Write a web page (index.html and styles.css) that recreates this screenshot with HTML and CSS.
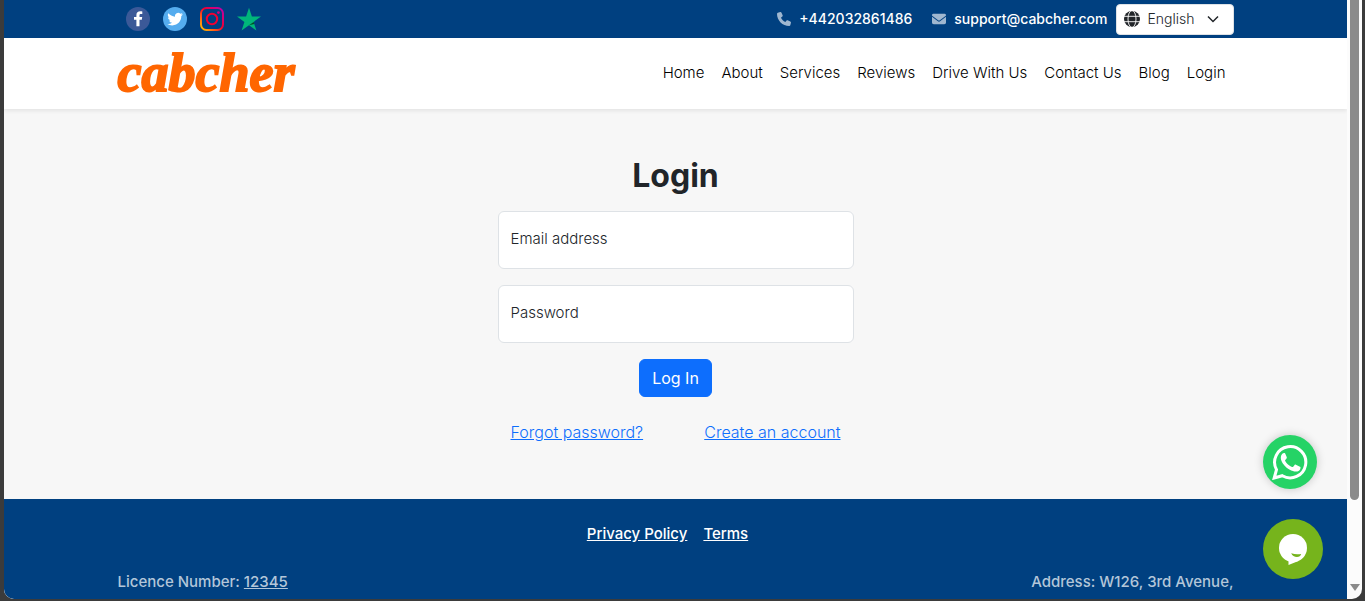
FILE: index.html
```html
<!DOCTYPE html>
<html lang="en">
<head>
<meta charset="utf-8">
<meta name="viewport" content="width=device-width, initial-scale=1">
<title>Login - Cabcher</title>
<link rel="stylesheet" href="styles.css">
</head>
<body>
<div class="window">
  <div class="page">
    <div class="topbar">
      <div class="container topbar-row">
        <div class="social">
          <a href="#" aria-label="Facebook"><svg viewBox="0 0 24 24"><circle cx="12" cy="12" r="12" fill="#3b5998"/><path fill="#fff" d="M13.500 19.300v-6.500h2.300l.4-2.800h-2.700V8.300c0-.8.4-1.300 1.400-1.300h1.400V4.500c-.5-.1-1.200-.2-2-.2-2.400 0-3.900 1.300-3.900 3.700v2H8v2.800h2.400v6.500z"/></svg></a>
          <a href="#" aria-label="Twitter"><svg viewBox="0 0 24 24"><circle cx="12" cy="12" r="12" fill="#55acee"/><path fill="#fff" transform="translate(4.300 4.300) scale(.65)" d="M23.950 4.570a10 10 0 0 1-2.820.770 4.960 4.960 0 0 0 2.160-2.720c-.950.550-2 .950-3.130 1.180a4.920 4.920 0 0 0-8.380 4.480C7.690 8.090 4.070 6.130 1.640 3.160a4.920 4.920 0 0 0 1.520 6.570 4.900 4.900 0 0 1-2.230-.610v.060a4.920 4.920 0 0 0 3.950 4.830 5 5 0 0 1-2.210.080 4.940 4.940 0 0 0 4.600 3.420A9.870 9.870 0 0 1 0 19.540a13.990 13.990 0 0 0 7.550 2.210c9.050 0 14-7.500 14-13.980 0-.210 0-.420-.020-.630a9.940 9.940 0 0 0 2.420-2.570z"/></svg></a>
          <a href="#" aria-label="Instagram"><svg viewBox="0 0 24 24"><defs><linearGradient id="insta" x1="0" y1="1" x2="1" y2="0"><stop offset="0" stop-color="#ffc800"/><stop offset=".3" stop-color="#ff5a16"/><stop offset=".55" stop-color="#f00030"/><stop offset="1" stop-color="#b900b4"/></linearGradient></defs><rect x="1" y="1" width="22" height="22" rx="5.500" fill="none" stroke="url(#insta)" stroke-width="2"/><circle cx="12" cy="12" r="5.200" fill="none" stroke="#f00030" stroke-width="2"/><circle cx="18.400" cy="5.600" r="1.400" fill="#d1007c"/></svg></a>
          <a href="#" aria-label="Trustpilot"><svg viewBox="0 0 24 24"><path fill="#00b67a" d="M12 .8l2.900 8.700H24l-7.400 5.400 2.800 8.600-7.400-5.300-7.400 5.300 2.800-8.600L0 9.500h9.100z"/><path fill="#005128" d="M17.300 16.900l-.7-2-4.600 3.300z"/></svg></a>
        </div>
        <div class="contact">
          <a class="contact-link" href="tel:+442032861486"><svg class="contact-icon" viewBox="0 0 512 512"><path d="M165 25c-8-19-29-29-48-23L29 26C12 31 0 46 0 64c0 247 201 448 448 448 18 0 33-12 38-29l24-88c5-20-5-41-24-49l-96-40c-16-7-35-2-46 12l-40 49C233 334 178 279 145 208l49-40c14-11 19-30 12-46z"/></svg><span>+442032861486</span></a>
          <a class="contact-link" href="mailto:support@cabcher.com"><svg class="contact-icon" viewBox="0 0 512 512"><path d="M48 64a48 48 0 0 0-29 86l218 164c11 8 27 8 38 0l218-164a48 48 0 0 0-29-86zM0 176v208c0 35 29 64 64 64h384c35 0 64-29 64-64V176L294 339c-23 18-54 18-77 0z"/></svg><span>support@cabcher.com</span></a>
          <label class="language">
            <svg class="globe" viewBox="0 0 16 16"><circle cx="8" cy="8" r="8" fill="#212529"/><g fill="none" stroke="#fff" stroke-width=".9"><ellipse cx="8" cy="8" rx="4" ry="8.400"/><path d="M0 5.300h16M0 10.700h16"/></g></svg>
            <select aria-label="Language"><option>English</option></select>
            <svg class="chevron" viewBox="0 0 12 12"><path d="M1 3.500l5 5 5-5" fill="none" stroke="#212529" stroke-width="1.500"/></svg>
          </label>
        </div>
      </div>
    </div>
    <header class="header">
      <div class="container header-row">
        <a class="logo" href="#">cabcher</a>
        <nav class="nav">
          <a href="#">Home</a><a href="#">About</a><a href="#">Services</a><a href="#">Reviews</a><a href="#">Drive With Us</a><a href="#">Contact Us</a><a href="#">Blog</a><a href="#">Login</a>
        </nav>
      </div>
    </header>
    <main class="main">
      <form class="login">
        <h1>Login</h1>
        <div class="field"><input id="email" type="email"><label for="email">Email address</label></div>
        <div class="field"><input id="password" type="password"><label for="password">Password</label></div>
        <button class="submit" type="button">Log In</button>
        <div class="login-links"><a href="#">Forgot password?</a><a href="#">Create an account</a></div>
      </form>
    </main>
    <footer class="footer">
      <div class="container">
        <div class="legal"><a href="#">Privacy Policy</a><a href="#">Terms</a></div>
        <div class="company"><span>Licence Number: <a href="#">12345</a></span><span>Address: W126, 3rd Avenue,</span></div>
      </div>
    </footer>
    <a class="whatsapp" href="#" aria-label="WhatsApp"><svg viewBox="0 0 36 36"><path d="M2.200 34l2.300-8.300A15.600 15.600 0 1 1 10.300 31.700z" fill="none" stroke="#fff" stroke-width="3"/><path fill="#fff" d="M13.300 9.800c-.4-.8-.8-.8-1.300-.8-.5 0-1.200.2-1.700.8-.7.700-1.500 2-1.500 4.200s1.600 4.800 1.900 5.200c.4.500 3.400 5.300 8.500 7.200 4.200 1.600 5 1.200 6 1.100 1-.1 2.600-1.200 3-2.300.4-1.200.4-2 .2-2.200-.2-.3-.6-.4-1-.6l-3.500-1.700c-.5-.2-.9-.3-1.300.300l-1.400 1.700c-.3.400-.6.500-1.100.200-.6-.3-2.200-.8-4.100-2.500-1.500-1.300-2.500-2.900-2.800-3.400-.3-.6 0-.9.300-1.200l1.200-1.600c.2-.4.100-.8 0-1.100z"/></svg></a>
    <button class="chat" type="button" aria-label="Chat"><svg viewBox="0 0 30 32"><circle cx="15" cy="15" r="14" fill="#fff"/><path fill="#fff" d="M10.500 27.500V32l10-4z"/><path fill="#76b41c" d="M13.200 20.200c3.400 1.300 6.600 1.300 10 .8-.5 2-2 3-4.300 3-2.600 0-4.500-1.200-5.700-3.800z"/></svg></button>
  </div>
  <div class="scrollbar" aria-hidden="true"><div class="thumb"></div><div class="arrow"></div></div>
</div>
</body>
</html>
```

FILE: styles.css
```css
* { box-sizing: border-box; }
body {
  margin: 0;
  background: #3b3b3b;
  color: #212529;
  font-family: Inter, "Liberation Sans", sans-serif;
  font-size: 15px;
  line-height: 24px;
}
svg { display: block; }
.window {
  display: flex;
  height: calc(100vh - 2px);
  margin: 0 3px 0 4px;
  overflow: hidden;
  border-radius: 0 0 10px 10px;
  background: #fcfcfc;
}
.page {
  position: relative;
  display: flex;
  flex: 1;
  flex-direction: column;
  overflow: hidden;
  background: #f7f7f7;
}
.container {
  width: 100%;
  max-width: 1140px;
  margin: 0 auto;
  padding: 0 12px;
}
.topbar { background: #004080; }
.topbar-row, .header-row, .contact, .contact-link, .social {
  display: flex;
  align-items: center;
}
.topbar-row, .header-row { justify-content: space-between; }
.topbar-row { height: 38px; }
.social { gap: 13px; padding-left: 8px; }
.social svg { width: 24px; height: 24px; }
.contact-link {
  gap: 8px;
  margin-right: 20px;
  color: #fff;
  font-size: 14px;
  font-weight: 450;
  text-decoration: none;
}
.contact-link + .contact-link { margin-right: 8px; }
.contact-icon { width: 14px; height: 14px; fill: #9fb7d0; }
.language {
  display: flex;
  align-items: center;
  gap: 8px;
  width: 118px;
  height: 31px;
  padding: 0 14px 0 7px;
  border: 1px solid #dee2e6;
  border-radius: 4px;
  background: #fff;
}
.globe { flex: none; width: 16px; height: 16px; }
.chevron { flex: none; width: 12px; height: 12px; }
.language select {
  flex: 1;
  min-width: 0;
  padding: 0;
  border: 0;
  appearance: none;
  background: none;
  color: #212529;
  font: inherit;
  font-size: 14px;
  font-weight: 300;
}
.header {
  position: relative;
  background: #fff;
  box-shadow: 0 2px 4px rgba(0, 0, 0, .08);
}
.header-row { height: 71px; padding-bottom: 2px; }
.logo {
  color: #ff6600;
  font-family: "Liberation Serif", serif;
  font-size: 54px;
  font-style: italic;
  font-weight: 700;
  line-height: 64px;
  text-decoration: none;
  -webkit-text-stroke: 2px #ff6600;
}
.nav { display: flex; gap: 17px; padding-right: 8px; }
.nav a { color: #000; font-weight: 300; text-decoration: none; }
.main { display: flex; justify-content: center; padding: 47px 12px 55px; }
.login { width: 356px; }
.login h1 {
  margin: 0 0 16px;
  font-size: 32px;
  font-weight: 700;
  line-height: 39px;
  text-align: center;
}
.field { position: relative; margin-bottom: 16px; }
.field input {
  display: block;
  width: 100%;
  height: 58px;
  padding: 16px 12px;
  border: 1px solid #dee2e6;
  border-radius: 6px;
  background: #fff;
  font: inherit;
}
.field label { position: absolute; top: 16px; left: 13px; font-weight: 300; }
.submit {
  display: block;
  margin: 0 auto 23px;
  padding: 6px 12px;
  border: 1px solid #0d6efd;
  border-radius: 6px;
  background: #0d6efd;
  color: #fff;
  font: inherit;
  font-size: 16px;
}
.login-links {
  display: flex;
  justify-content: space-between;
  padding: 0 13px;
  font-size: 16px;
  font-weight: 300;
}
.login-links a { color: #0d6efd; }
.footer { flex: 1; padding-top: 23px; background: #004080; font-weight: 450; }
.footer a { color: inherit; }
.legal {
  display: flex;
  justify-content: center;
  gap: 16px;
  padding-right: 16px;
  margin-bottom: 24px;
  color: #fff;
}
.company { display: flex; justify-content: space-between; color: #b3c6d9; }
.whatsapp, .chat {
  position: absolute;
  display: grid;
  place-items: center;
  border-radius: 50%;
}
.whatsapp {
  right: 30px;
  bottom: 110px;
  width: 54px;
  height: 54px;
  background: #25d366;
  box-shadow: 0 0 10px rgba(0, 0, 0, .2);
}
.whatsapp svg { width: 36px; height: 36px; }
.chat {
  right: 24px;
  bottom: 20px;
  width: 60px;
  height: 60px;
  padding: 0;
  border: 0;
  background: #76b41c;
}
.chat svg { width: 30px; height: 32px; }
.scrollbar {
  display: flex;
  flex-direction: column;
  align-items: center;
  justify-content: space-between;
  width: 15px;
  padding-bottom: 8px;
}
.thumb { width: 9px; height: 500px; border-radius: 0 0 5px 5px; background: #8b8b8b; }
.arrow {
  border: 5px solid transparent;
  border-top: 7px solid #8b8b8b;
  border-bottom: 0;
}
```
